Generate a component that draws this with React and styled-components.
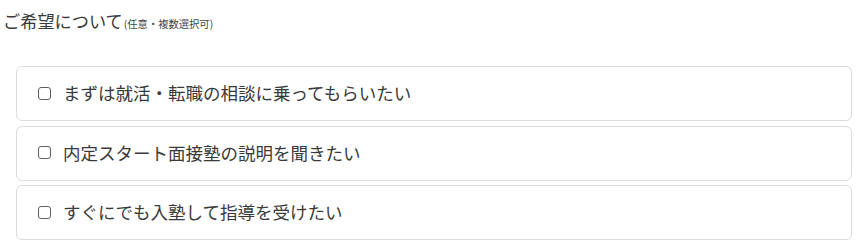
import styled, { createGlobalStyle } from "styled-components";

const GlobalStyle = createGlobalStyle`
  html, body {
    margin: 0;
    padding: 0;
    background: #fff;
  }
  body {
    font-family: "Noto Sans CJK JP", "Noto Sans", sans-serif;
    color: #333;
  }
`;

const Wrap = styled.section`
  width: 862px;
  padding: 8px 10px 0 16px;
  box-sizing: border-box;
`;

const Title = styled.h3`
  margin: 0 0 29px -13px;
  font-size: 17.2px;
  font-weight: 400;
  line-height: 26px;
  color: #3a3a3a;
  > small {
    font-size: 10.3px;
    color: #444;
    margin-left: 1px;
  }
`;

const List = styled.div`
  display: flex;
  flex-direction: column;
  gap: 4.5px;
`;

const Option = styled.label`
  display: flex;
  align-items: center;
  height: 55px;
  box-sizing: border-box;
  padding: 0 0 1px 21px;
  border: 1px solid #dcdcdc;
  border-radius: 6px;
  background-color: #fff;
  cursor: pointer;
  > span {
    font-size: 17.5px;
    color: #3a3a3a;
    line-height: 1;
  }
`;

const Check = styled.input`
  appearance: none;
  width: 13px;
  height: 13px;
  margin: 0 12px 0 0;
  border: 1px solid #5f5f5f;
  border-radius: 3px;
  background: #fff;
  box-sizing: border-box;
  flex-shrink: 0;
  &:checked {
    background: #3b82f6;
    border-color: #3b82f6;
  }
`;

const options = [
  "まずは就活・転職の相談に乗ってもらいたい",
  "内定スタート面接塾の説明を聞きたい",
  "すぐにでも入塾して指導を受けたい",
];

const App = () => {
  return (
    <>
      <GlobalStyle />
      <Wrap>
        <Title>
          ご希望について<small>(任意・複数選択可)</small>
        </Title>
        <List>
          {options.map((text) => (
            <Option key={text}>
              <Check type="checkbox" />
              <span>{text}</span>
            </Option>
          ))}
        </List>
      </Wrap>
    </>
  );
};

export default App;
